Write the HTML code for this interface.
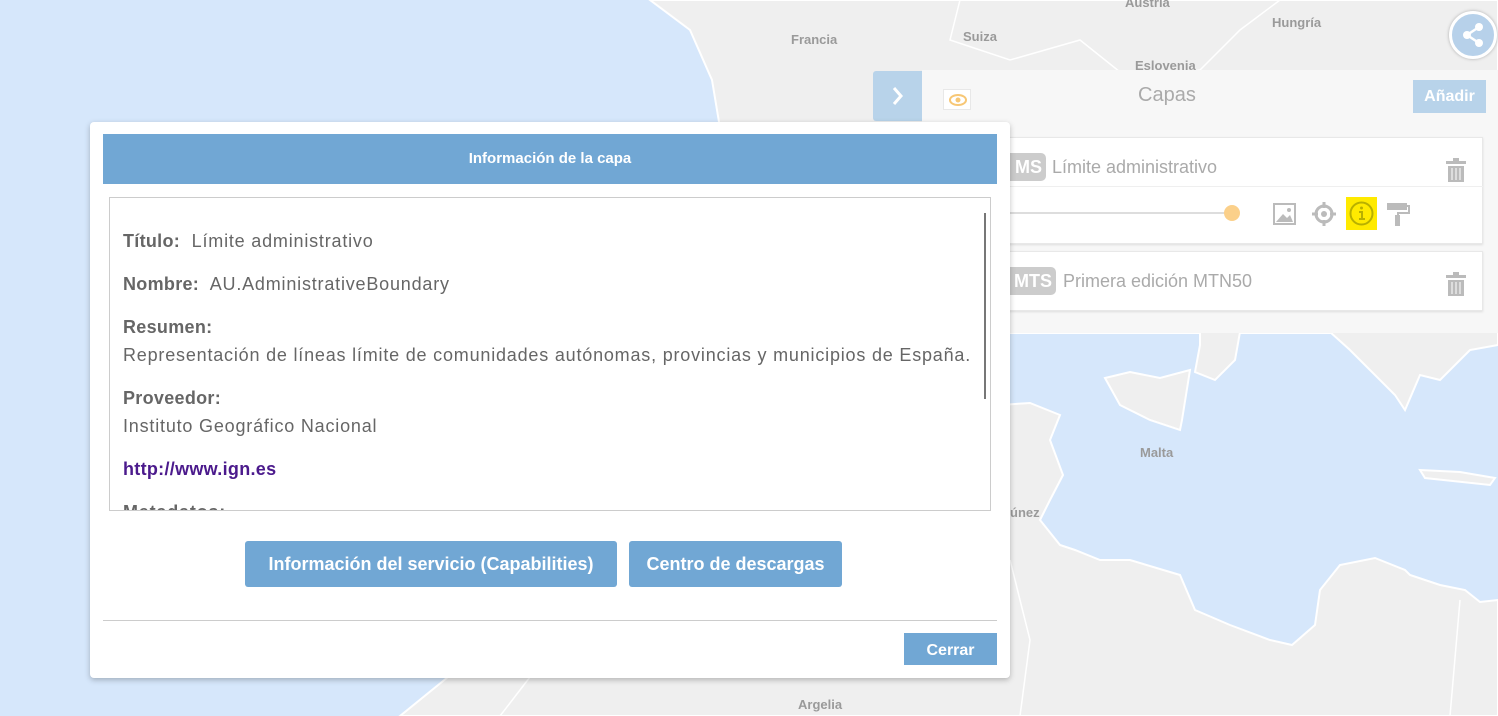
<!DOCTYPE html>
<html><head><meta charset="utf-8"><style>
*{box-sizing:border-box;margin:0;padding:0}
body{width:1498px;height:716px;overflow:hidden;position:relative;font-family:"Liberation Sans",sans-serif;background:#d6e7fb}
.abs{position:absolute}
.lbl{position:absolute;font-size:13px;font-weight:bold;color:#9a9a9a}
</style></head><body>
<svg class="abs" style="left:0;top:0" width="1498" height="716">
<g fill="#efefef" stroke="#fff" stroke-width="2">
<path d="M650,0 L1498,0 L1498,333 L870,333 L740,250 L722,140 L712,80 L690,30 Z"/>
<path d="M1200,332 L1240,332 L1235,360 L1215,380 L1195,372 L1200,345 Z"/>
<path d="M1330,332 L1498,332 L1498,345 L1470,350 L1440,380 L1420,375 L1405,410 L1395,395 L1370,370 L1350,350 Z"/>
<path d="M1105,378 L1130,372 L1160,378 L1190,370 L1182,420 L1180,430 L1150,420 L1120,405 Z"/>
<path d="M1420,470 L1460,472 L1495,478 L1490,485 L1425,478 Z"/>
<path d="M1000,405 L1030,403 L1060,415 L1050,440 L1063,475 L1050,500 L1040,520 L1060,545 L1075,550 L1100,560 L1130,560 L1180,575 L1195,610 L1230,625 L1270,640 L1292,645 L1315,625 L1320,590 L1340,565 L1375,558 L1405,570 L1410,575 L1440,585 L1465,590 L1480,602 L1498,600 L1498,716 L400,716 L448,677 L1000,677 Z"/>
</g>
<g fill="none" stroke="#fff" stroke-width="1.5"><path d="M960,0 L950,40 L1010,60 L1080,40 L1130,80 L1200,70 L1240,30 L1280,0"/><path d="M1010,560 L1030,640 L1020,716"/><path d="M1460,600 L1450,716"/><path d="M530,677 L500,716"/></g>
</svg>
<div class="lbl" style="left:791px;top:32px">Francia</div>
<div class="lbl" style="left:963px;top:29px">Suiza</div>
<div class="lbl" style="left:1125px;top:-5px">Austria</div>
<div class="lbl" style="left:1272px;top:15px">Hungría</div>
<div class="lbl" style="left:1135px;top:58px">Eslovenia</div>
<div class="lbl" style="left:1140px;top:445px">Malta</div>
<div class="lbl" style="left:1010px;top:505px">únez</div>
<div class="lbl" style="left:798px;top:697px">Argelia</div>

<div class="abs" style="left:1449px;top:11px;width:48px;height:48px;border-radius:50%;background:#b7d1ea;border:3px solid #fff;box-shadow:0 0 3px #aaa">
<svg width="42" height="42" viewBox="0 0 42 42" style="position:absolute;left:0;top:0"><g fill="#fff"><circle cx="27" cy="13" r="4"/><circle cx="15" cy="21" r="4"/><circle cx="27" cy="29" r="4"/></g><path d="M27,13 L15,21 L27,29" stroke="#fff" stroke-width="2.5" fill="none"/></svg></div>

<div class="abs" style="left:922px;top:70px;width:576px;height:263px;background:#f7f7f7"></div>
<div class="abs" style="left:873px;top:71px;width:49px;height:50px;background:#b8d3ea;border-radius:3px 0 0 3px"><svg width="49" height="50"><path d="M21,17 L28,25 L21,33" stroke="#fff" stroke-width="3" fill="none"/></svg></div>
<div class="abs" style="left:943px;top:89px;width:28px;height:21px;background:#fff;border:1px solid #e8e8e8"><svg width="28" height="21"><ellipse cx="14" cy="10" rx="8" ry="5" fill="none" stroke="#f7c775" stroke-width="2"/><circle cx="14" cy="10" r="2.5" fill="#f7c775"/></svg></div>
<div class="abs" style="left:1138px;top:84px;font-size:20px;color:#aaa">Capas</div>
<div class="abs" style="left:1413px;top:80px;width:73px;height:33px;background:#b8d3ea;color:#fff;font-weight:bold;font-size:16px;line-height:33px;text-align:center">Añadir</div>

<div class="abs" style="left:990px;top:137px;width:493px;height:107px;background:#fff;border:1px solid #e8e8e8;box-shadow:0 1px 2px #ddd"></div>
<div class="abs" style="left:990px;top:186px;width:493px;height:1px;background:#efefef"></div>
<div class="abs" style="left:1005px;top:153px;width:41px;height:28px;background:#ccc;border-radius:5px;color:#fff;font-weight:bold;font-size:18px;line-height:28px;text-align:right;padding-right:4px">MS</div>
<div class="abs" style="left:1052px;top:157px;font-size:18px;color:#aaa">Límite administrativo</div>
<svg class="abs" style="left:1445px;top:158px" width="24" height="26"><g fill="#bbb"><rect x="1" y="3" width="20" height="3"/><rect x="8" y="0" width="6" height="3"/><rect x="3" y="8" width="16" height="16"/></g><g stroke="#fff" stroke-width="1"><path d="M7,10V22M11,10V22M15,10V22"/></g></svg>
<div class="abs" style="left:1005px;top:212px;width:227px;height:2px;background:#ddd"></div>
<div class="abs" style="left:1224px;top:205px;width:16px;height:16px;border-radius:50%;background:#fbd08a"></div>
<svg class="abs" style="left:1272px;top:202px" width="26" height="24"><rect x="2" y="2" width="21" height="20" fill="none" stroke="#bbb" stroke-width="2"/><path d="M4,20 L11,12 L15,16 L18,13 L21,20 Z" fill="#bbb"/><circle cx="17" cy="8" r="2" fill="#bbb"/></svg>
<svg class="abs" style="left:1311px;top:201px" width="26" height="26"><circle cx="13" cy="13" r="8" fill="none" stroke="#bbb" stroke-width="3"/><circle cx="13" cy="13" r="3" fill="#bbb"/><path d="M13,1V7M13,19V25M1,13H7M19,13H25" stroke="#bbb" stroke-width="3"/></svg>
<div class="abs" style="left:1346px;top:197px;width:31px;height:33px;background:#ffea00"><svg width="31" height="33"><circle cx="15.5" cy="16.5" r="11" fill="none" stroke="#b8b000" stroke-width="2"/><circle cx="15.5" cy="11" r="1.5" fill="#b8b000"/><path d="M13,15H16V22M13,22H19" stroke="#b8b000" stroke-width="2" fill="none"/></svg></div>
<svg class="abs" style="left:1385px;top:202px" width="26" height="24"><rect x="2" y="1" width="20" height="7" fill="#bbb"/><path d="M22,4H24V11H13V14" stroke="#bbb" stroke-width="2" fill="none"/><rect x="10" y="13" width="5" height="11" fill="#bbb"/></svg>

<div class="abs" style="left:990px;top:251px;width:493px;height:60px;background:#fff;border:1px solid #e8e8e8;box-shadow:0 1px 2px #ddd"></div>
<div class="abs" style="left:1005px;top:267px;width:51px;height:28px;background:#ccc;border-radius:5px;color:#fff;font-weight:bold;font-size:18px;line-height:28px;text-align:right;padding-right:4px">MTS</div>
<div class="abs" style="left:1063px;top:271px;font-size:18px;color:#aaa">Primera edición MTN50</div>
<svg class="abs" style="left:1445px;top:272px" width="24" height="26"><g fill="#bbb"><rect x="1" y="3" width="20" height="3"/><rect x="8" y="0" width="6" height="3"/><rect x="3" y="8" width="16" height="16"/></g><g stroke="#fff" stroke-width="1"><path d="M7,10V22M11,10V22M15,10V22"/></g></svg>

<div class="abs" style="left:90px;top:122px;width:920px;height:556px;background:#fff;border-radius:4px;box-shadow:0 2px 6px rgba(0,0,0,.25)">
<div class="abs" style="left:13px;top:12px;width:894px;height:50px;background:#71a7d4;color:#fff;font-weight:bold;font-size:15px;line-height:50px;text-align:center">Información de la capa</div>
<div class="abs" style="left:19px;top:75px;width:882px;height:314px;border:1px solid #ccc;overflow:hidden;color:#666;font-size:18px;letter-spacing:0.8px;padding:32px 0 0 13px;line-height:23px;white-space:nowrap">
<div style="position:absolute;right:4px;top:15px;width:2px;height:186px;background:#777"></div>
<div><b style="letter-spacing:0.3px">Título:</b>&nbsp; Límite administrativo</div>
<div style="margin-top:20px"><b style="letter-spacing:0.3px">Nombre:</b>&nbsp; AU.AdministrativeBoundary</div>
<div style="margin-top:20px"><b style="letter-spacing:0.3px">Resumen:</b></div>
<div style="margin-top:5px">Representación de líneas límite de comunidades autónomas, provincias y municipios de España.</div>
<div style="margin-top:20px"><b style="letter-spacing:0.3px">Proveedor:</b></div>
<div style="margin-top:5px">Instituto Geográfico Nacional</div>
<div style="margin-top:20px;color:#4b1a8c;font-weight:bold;letter-spacing:0.3px">http://www.ign.es</div>
<div style="margin-top:20px"><b>Metadatos:</b></div>
</div>
<div class="abs" style="left:155px;top:419px;width:372px;height:46px;background:#71a7d4;border-radius:3px;color:#fff;font-weight:bold;font-size:18px;line-height:46px;text-align:center">Información del servicio (Capabilities)</div>
<div class="abs" style="left:539px;top:419px;width:213px;height:46px;background:#71a7d4;border-radius:3px;color:#fff;font-weight:bold;font-size:18px;line-height:46px;text-align:center">Centro de descargas</div>
<div class="abs" style="left:13px;top:498px;width:894px;height:1px;background:#ccc"></div>
<div class="abs" style="left:814px;top:511px;width:93px;height:32px;background:#71a7d4;color:#fff;font-weight:bold;font-size:16px;line-height:36px;text-align:center">Cerrar</div>
</div>
</body></html>
